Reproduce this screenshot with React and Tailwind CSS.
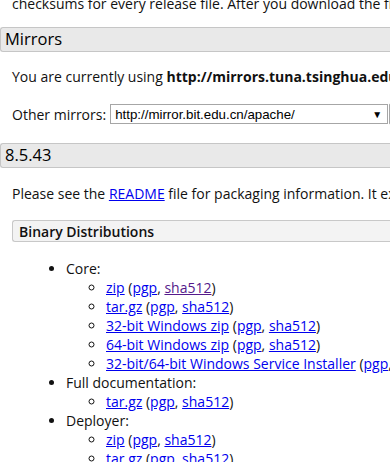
const core = [
    { label: 'zip', visited: true },
    { label: 'tar.gz' },
    { label: '32-bit Windows zip' },
    { label: '64-bit Windows zip' },
    { label: '32-bit/64-bit Windows Service Installer' },
];

function Link({ children, visited }) {
    return (
        <a href="#" className={`underline ${visited ? 'text-[#551a8b]' : 'text-[#0000ee]'}`}>
            {children}
        </a>
    );
}

function Artifact({ item }) {
    return (
        <li className="list-[circle]">
            <Link>{item.label}</Link> (<Link>pgp</Link>, <Link visited={item.visited}>sha512</Link>)
        </li>
    );
}

function SectionHeader({ children }) {
    return (
        <div className="flex h-[25px] items-center rounded-l-[3px] border border-r-0 border-[#c6c6c6] bg-[#e9e9e9] pl-1 text-[16.5px] font-medium leading-none text-black">
            {children}
        </div>
    );
}

export default function App() {
    return (
        <div className="h-[462px] w-[390px] overflow-hidden bg-white font-['Open_Sans',sans-serif] text-[14px] leading-[19px] text-[#111]">
            <div className="w-[900px]">
                <p className="-mt-[6px] mb-[14px] pl-3 whitespace-nowrap">
                    checksums for every release file. After you download the file, you should calculate a checksum
                </p>

                <SectionHeader>Mirrors</SectionHeader>

                <p className="mt-[15px] pl-3 whitespace-nowrap">
                    You are currently using <b>http://mirrors.tuna.tsinghua.edu.cn/apache/</b>. If you encounter a problem
                </p>

                <div className="mt-[17px] flex items-center pl-3">
                    <span className="mr-[4px] whitespace-nowrap">Other mirrors:</span>
                    <div className="flex h-[20px] w-[278px] items-center justify-between border border-[#a6a6a6] bg-white pl-[4px] pr-[5px] font-['Liberation_Sans',sans-serif] text-[13.3px] text-black">
                        <span>http://mirror.bit.edu.cn/apache/</span>
                        <span className="text-[10px]">▼</span>
                    </div>
                    <div className="ml-[1px] h-[22px] w-[40px] rounded-[2px] border border-[#a6a6a6] bg-[#efefef]" />
                </div>

                <div className="mt-[18px]">
                    <SectionHeader>8.5.43</SectionHeader>
                </div>

                <p className="mt-[16px] pl-3 whitespace-nowrap">
                    Please see the <Link>README</Link> file for packaging information. It explains what every distribution contains.
                </p>

                <div className="ml-3 mt-[17px] flex h-[22px] items-center rounded-l-[3px] border border-r-0 border-[#c8c8c8] bg-[#f3f3f3] pl-[6px] font-semibold">
                    Binary Distributions
                </div>

                <ul className="mt-[17px] list-disc pl-[66px] whitespace-nowrap">
                    <li>
                        Core:
                        <ul className="pl-[40px]">
                            {core.map((item) => (
                                <Artifact key={item.label} item={item} />
                            ))}
                        </ul>
                    </li>
                    <li>
                        Full documentation:
                        <ul className="pl-[40px]">
                            <Artifact item={{ label: 'tar.gz' }} />
                        </ul>
                    </li>
                    <li>
                        Deployer:
                        <ul className="pl-[40px]">
                            <Artifact item={{ label: 'zip' }} />
                            <Artifact item={{ label: 'tar.gz' }} />
                        </ul>
                    </li>
                </ul>
            </div>
        </div>
    );
}
